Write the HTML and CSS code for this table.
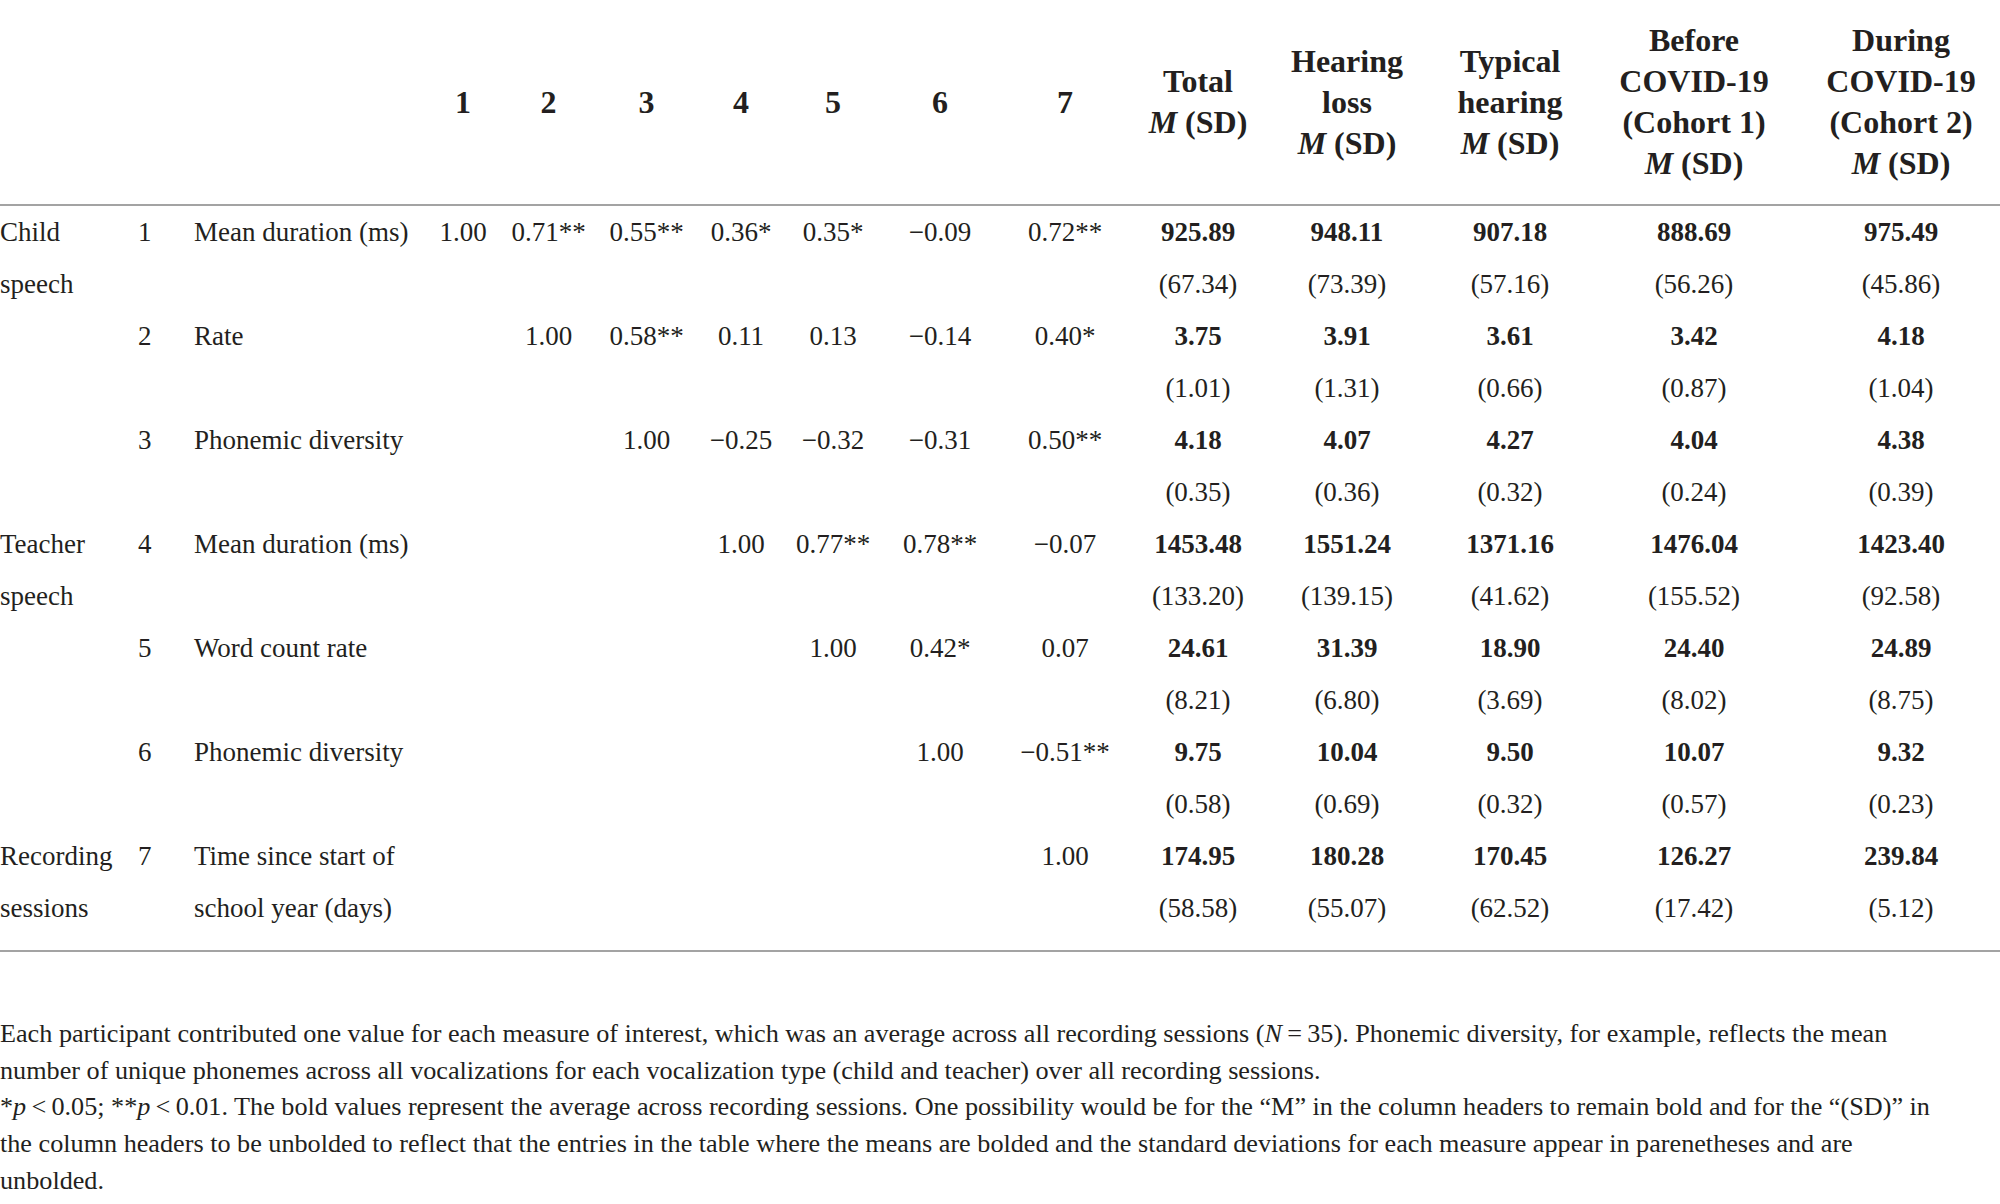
FILE: index.html
```html
<!DOCTYPE html>
<html lang="en">
<head>
    <meta charset="UTF-8">
    <title>Table: speech measures</title>
    <link rel="stylesheet" href="styles.css">
</head>
<body>
    <div class="wrapper">
        <table class="stats">
            <colgroup>
                <col class="c-group">
                <col class="c-num">
                <col class="c-var">
                <col class="c1"><col class="c2"><col class="c3"><col class="c4">
                <col class="c5"><col class="c6"><col class="c7">
                <col class="c8"><col class="c9"><col class="c10"><col class="c11"><col class="c12">
            </colgroup>
            <thead>
                <tr>
                    <th></th><th></th><th></th>
                    <th>1</th><th>2</th><th>3</th><th>4</th><th>5</th><th>6</th><th>7</th>
                    <th>Total<br><i>M</i> (SD)</th>
                    <th>Hearing<br>loss<br><i>M</i> (SD)</th>
                    <th>Typical<br>hearing<br><i>M</i> (SD)</th>
                    <th>Before<br>COVID-19<br>(Cohort 1)<br><i>M</i> (SD)</th>
                    <th>During<br>COVID-19<br>(Cohort 2)<br><i>M</i> (SD)</th>
                </tr>
            </thead>
            <tbody>
                <tr>
                    <td class="group">Child<br>speech</td>
                    <td class="num">1</td>
                    <td class="var">Mean duration (ms)</td>
                    <td>1.00</td><td>0.71**</td><td>0.55**</td><td>0.36*</td><td>0.35*</td><td>&minus;0.09</td><td>0.72**</td>
                    <td><b>925.89</b><br>(67.34)</td>
                    <td><b>948.11</b><br>(73.39)</td>
                    <td><b>907.18</b><br>(57.16)</td>
                    <td><b>888.69</b><br>(56.26)</td>
                    <td><b>975.49</b><br>(45.86)</td>
                </tr>
                <tr>
                    <td class="group"></td>
                    <td class="num">2</td>
                    <td class="var">Rate</td>
                    <td></td><td>1.00</td><td>0.58**</td><td>0.11</td><td>0.13</td><td>&minus;0.14</td><td>0.40*</td>
                    <td><b>3.75</b><br>(1.01)</td>
                    <td><b>3.91</b><br>(1.31)</td>
                    <td><b>3.61</b><br>(0.66)</td>
                    <td><b>3.42</b><br>(0.87)</td>
                    <td><b>4.18</b><br>(1.04)</td>
                </tr>
                <tr>
                    <td class="group"></td>
                    <td class="num">3</td>
                    <td class="var">Phonemic diversity</td>
                    <td></td><td></td><td>1.00</td><td>&minus;0.25</td><td>&minus;0.32</td><td>&minus;0.31</td><td>0.50**</td>
                    <td><b>4.18</b><br>(0.35)</td>
                    <td><b>4.07</b><br>(0.36)</td>
                    <td><b>4.27</b><br>(0.32)</td>
                    <td><b>4.04</b><br>(0.24)</td>
                    <td><b>4.38</b><br>(0.39)</td>
                </tr>
                <tr>
                    <td class="group">Teacher<br>speech</td>
                    <td class="num">4</td>
                    <td class="var">Mean duration (ms)</td>
                    <td></td><td></td><td></td><td>1.00</td><td>0.77**</td><td>0.78**</td><td>&minus;0.07</td>
                    <td><b>1453.48</b><br>(133.20)</td>
                    <td><b>1551.24</b><br>(139.15)</td>
                    <td><b>1371.16</b><br>(41.62)</td>
                    <td><b>1476.04</b><br>(155.52)</td>
                    <td><b>1423.40</b><br>(92.58)</td>
                </tr>
                <tr>
                    <td class="group"></td>
                    <td class="num">5</td>
                    <td class="var">Word count rate</td>
                    <td></td><td></td><td></td><td></td><td>1.00</td><td>0.42*</td><td>0.07</td>
                    <td><b>24.61</b><br>(8.21)</td>
                    <td><b>31.39</b><br>(6.80)</td>
                    <td><b>18.90</b><br>(3.69)</td>
                    <td><b>24.40</b><br>(8.02)</td>
                    <td><b>24.89</b><br>(8.75)</td>
                </tr>
                <tr>
                    <td class="group"></td>
                    <td class="num">6</td>
                    <td class="var">Phonemic diversity</td>
                    <td></td><td></td><td></td><td></td><td></td><td>1.00</td><td>&minus;0.51**</td>
                    <td><b>9.75</b><br>(0.58)</td>
                    <td><b>10.04</b><br>(0.69)</td>
                    <td><b>9.50</b><br>(0.32)</td>
                    <td><b>10.07</b><br>(0.57)</td>
                    <td><b>9.32</b><br>(0.23)</td>
                </tr>
                <tr class="last">
                    <td class="group">Recording<br>sessions</td>
                    <td class="num">7</td>
                    <td class="var">Time since start of<br>school year (days)</td>
                    <td></td><td></td><td></td><td></td><td></td><td></td><td>1.00</td>
                    <td><b>174.95</b><br>(58.58)</td>
                    <td><b>180.28</b><br>(55.07)</td>
                    <td><b>170.45</b><br>(62.52)</td>
                    <td><b>126.27</b><br>(17.42)</td>
                    <td><b>239.84</b><br>(5.12)</td>
                </tr>
            </tbody>
        </table>

        <div class="notes">
            <p>Each participant contributed one value for each measure of interest, which was an average across all recording sessions (<i>N</i>&thinsp;=&thinsp;35). Phonemic diversity, for example, reflects the mean<br>number of unique phonemes across all vocalizations for each vocalization type (child and teacher) over all recording sessions.</p>
            <p>*<i>p</i>&thinsp;&lt;&thinsp;0.05; **<i>p</i>&thinsp;&lt;&thinsp;0.01. The bold values represent the average across recording sessions. One possibility would be for the &ldquo;M&rdquo; in the column headers to remain bold and for the &ldquo;(SD)&rdquo; in<br>the column headers to be unbolded to reflect that the entries in the table where the means are bolded and the standard deviations for each measure appear in parenetheses and are<br>unbolded.</p>
        </div>
    </div>
</body>
</html>
```

FILE: styles.css
```css
* {
    margin: 0;
    padding: 0;
}

html, body {
    background: #ffffff;
    overflow: hidden;
}

body {
    font-family: "Liberation Serif", "Times New Roman", serif;
    color: #231f20;
}

.wrapper {
    width: 2000px;
}

.stats {
    width: 2000px;
    table-layout: fixed;
    border-collapse: collapse;
    font-size: 27px;
}

/* column widths, picked so each centre lands where the print has it */
.c-group { width: 138px; }
.c-num { width: 56px; }
.c-var { width: 226px; }
.c1 { width: 86px; }
.c2 { width: 85px; }
.c3 { width: 111px; }
.c4 { width: 78px; }
.c5 { width: 106px; }
.c6 { width: 108px; }
.c7 { width: 142px; }
.c8 { width: 124px; }
.c9 { width: 174px; }
.c10 { width: 152px; }
.c11 { width: 216px; }
.c12 { width: 198px; }

.stats thead tr {
    border-bottom: 2px solid #a3a3a3;
}

.stats th {
    font-size: 32px;
    font-weight: bold;
    line-height: 41px;
    padding: 20px 0;
    text-align: center;
    vertical-align: middle;
}

.stats td {
    line-height: 52px;
    text-align: center;
    vertical-align: top;
    white-space: nowrap;
}

.stats td.group,
.stats td.num,
.stats td.var {
    text-align: left;
}

.stats tr.last {
    border-bottom: 2px solid #a3a3a3;
}

.stats tr.last td {
    padding-bottom: 16px;
}

.notes {
    margin-top: 64px;
    font-size: 26.2px;
    line-height: 36.7px;
    white-space: nowrap;
}
```
